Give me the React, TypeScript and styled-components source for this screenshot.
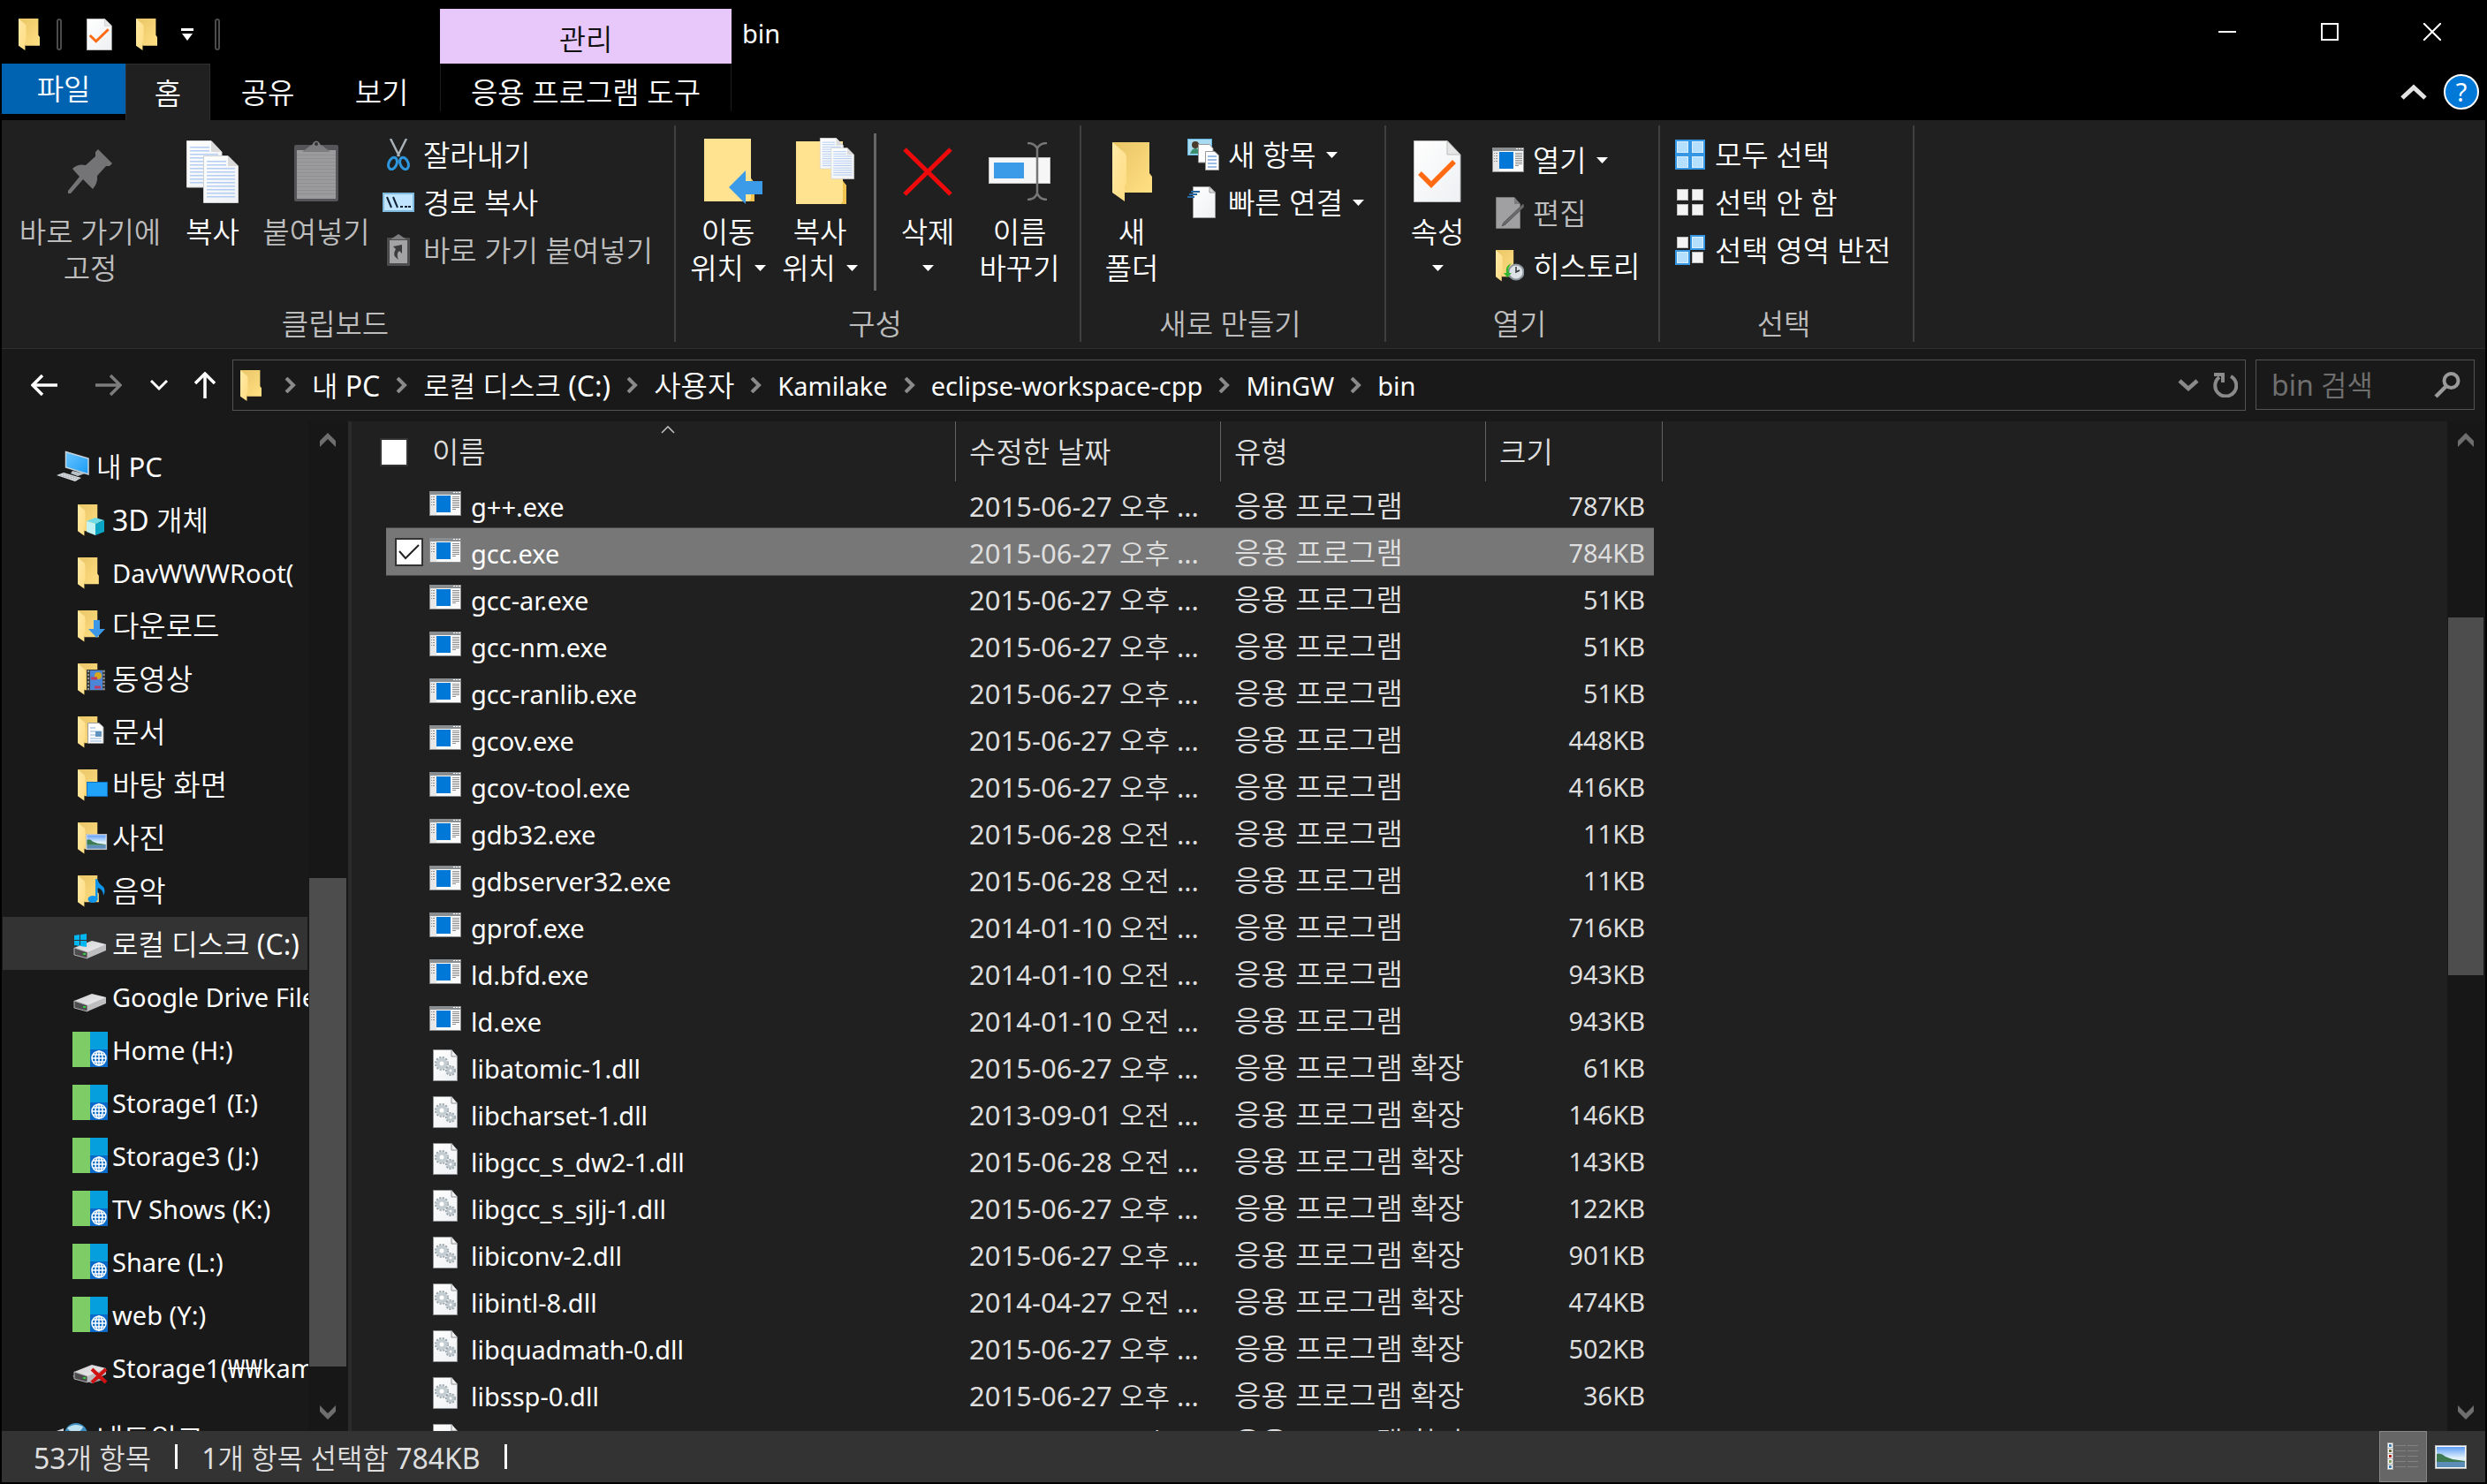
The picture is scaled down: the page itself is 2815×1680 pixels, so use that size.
import React from "react";
import styled, { createGlobalStyle, css } from "styled-components";

const LATIN = 29;
const DATE = 31;
const MIXED = 32;
const HANGUL = 33;

const GlobalStyle = createGlobalStyle`
  *, *::before, *::after { box-sizing: border-box; }
  html, body { margin: 0; padding: 0; background: #000; }
  body {
    font-family: "Noto Sans", "Noto Sans CJK KR DemiLight", "Noto Sans CJK KR", sans-serif;
    font-size: ${HANGUL}px;
    line-height: 41px;
    color: #fff;
    overflow: hidden;
  }
  button, input { font: inherit; color: inherit; }
  button { background: none; border: 0; padding: 0; margin: 0; cursor: default; }
  a { color: inherit; text-decoration: none; }
  svg { display: block; flex: none; }
`;

/* ---------- drawings ---------- */

const Defs = styled.svg`
  position: absolute;
  width: 0;
  height: 0;
`;

const SharedDefs = () => (
  <Defs aria-hidden="true">
    <defs>
      <linearGradient id="gBack" x1="0" y1="0" x2="1" y2="1">
        <stop offset="0" stopColor="#e9c565" />
        <stop offset="1" stopColor="#ffe084" />
      </linearGradient>
      <linearGradient id="gFlap" x1="0" y1="0" x2="1" y2="1">
        <stop offset="0" stopColor="#ffeaa6" />
        <stop offset="1" stopColor="#ffdc82" />
      </linearGradient>
      <linearGradient id="gPaper" x1="0" y1="0" x2="1" y2="1">
        <stop offset="0" stopColor="#ffffff" />
        <stop offset="1" stopColor="#eef0f3" />
      </linearGradient>
      <linearGradient id="gSky" x1="0" y1="0" x2="0" y2="1">
        <stop offset="0" stopColor="#5e9cf5" />
        <stop offset="0.55" stopColor="#e2f2fd" />
        <stop offset="1" stopColor="#cfe4f4" />
      </linearGradient>
      <linearGradient id="gScreen" x1="0" y1="0" x2="1" y2="1">
        <stop offset="0" stopColor="#6cc5ff" />
        <stop offset="1" stopColor="#189cf5" />
      </linearGradient>
      <linearGradient id="gDrive" x1="0" y1="0" x2="1" y2="1">
        <stop offset="0" stopColor="#cfcfd2" />
        <stop offset="1" stopColor="#f0f0f2" />
      </linearGradient>
    </defs>
  </Defs>
);

const FolderShape = () => (
  <>
    <path d="M0 0H42V35L45 39V57H14Z" fill="url(#gBack)" />
    <path d="M0 0L14 12Q16 14 16 17V46L14 50V67L0 57Z" fill="url(#gFlap)" />
  </>
);

const Folder = ({ w = 24, h = 36 }: { w?: number; h?: number }) => (
  <svg width={w} height={h} viewBox="0 0 45 67" preserveAspectRatio="none" aria-hidden="true">
    <FolderShape />
  </svg>
);

const CheckedPage = ({ w, h }: { w: number; h: number }) => (
  <svg width={w} height={h} viewBox="0 0 54 70" preserveAspectRatio="none" aria-hidden="true">
    <path d="M.5 .5H38L53 16V69.500H.5Z" fill="url(#gPaper)" stroke="#b9b9b9" />
    <path d="M38 .5V16H53Z" fill="#e6e6e6" stroke="#bdbdbd" />
    <path d="M7 37L20 50L46 24" fill="none" stroke="#ff6a13" strokeWidth="5.500" />
  </svg>
);

const Pin = () => (
  <svg width="50" height="50" viewBox="0 0 50 50" aria-hidden="true">
    <path d="M34 0L50 16L47 19L43 19L33 30Q34 38 28 45L17 34L3 50L0 50L0 47L13 31L5 22Q11 16 20 18L31 8L31 3Z" fill="#747476" />
  </svg>
);

const pageLines = (x: number, y: number, w: number, count: number) =>
  Array.from({ length: count }, (_, i) => (
    <rect key={i} x={x} y={y + i * 4} width={w} height="1.500" fill="#b4cdf2" />
  ));

const PagesShape = () => (
  <>
    <path d="M.5 .5H28L40 13V53H.5Z" fill="url(#gPaper)" stroke="#d5d5d5" />
    <path d="M28 .5V13H40Z" fill="#dadada" />
    {pageLines(4, 7, 22, 2)}
    {pageLines(4, 15, 32, 9)}
    <path d="M19.500 17.500H47L58.500 29V70.500H19.500Z" fill="url(#gPaper)" stroke="#d0d0d0" />
    <path d="M47 17.500V29H58.500Z" fill="#dadada" />
    {pageLines(23, 23, 22, 2)}
    {pageLines(23, 31, 32, 9)}
  </>
);

const CopyPages = () => (
  <svg width="59" height="71" viewBox="0 0 59 71" aria-hidden="true">
    <PagesShape />
  </svg>
);

const Clipboard = () => (
  <svg width="52" height="70" viewBox="0 0 52 70" aria-hidden="true">
    <rect x="1" y="5" width="50" height="64" rx="2" fill="#56565a" />
    <rect x="4" y="11" width="44" height="55" fill="#9b9b9d" />
    {Array.from({ length: 12 }, (_, i) => (
      <rect key={i} x="4" y={16 + i * 4} width="44" height="1" fill="#8f8f91" />
    ))}
    <path d="M10 13L19 6Q22 5 23 2Q26 -1 29 2Q30 5 33 6L42 13Z" fill="#7d7d80" />
    <circle cx="26" cy="4" r="2" fill="#333" />
  </svg>
);

const Scissors = () => (
  <svg width="36" height="36" viewBox="0 0 36 36" aria-hidden="true">
    <path d="M9 0L19 20M27 0L17 20" stroke="#a9b2b8" strokeWidth="2.500" fill="none" />
    <ellipse cx="11.500" cy="28" rx="4.500" ry="7" transform="rotate(22 11.500 28)" fill="none" stroke="#2d96dc" strokeWidth="3" />
    <ellipse cx="24.500" cy="28" rx="4.500" ry="7" transform="rotate(-22 24.500 28)" fill="none" stroke="#2d96dc" strokeWidth="3" />
  </svg>
);

const PathIcon = () => (
  <svg width="36" height="22" viewBox="0 0 36 22" aria-hidden="true">
    <rect x="1" y="1" width="34" height="20" fill="#bfe5ff" stroke="#7fb9dd" strokeWidth="2" />
    <path d="M5 5L10 17M12 5L17 17" stroke="#123" strokeWidth="2" />
    <path d="M20 15H23V17H20ZM25 15H28V17H25ZM29 15H32V17H29Z" fill="#123" />
  </svg>
);

const PasteShortcut = () => (
  <svg width="36" height="36" viewBox="0 0 36 36" aria-hidden="true">
    <rect x="5" y="4" width="26" height="32" rx="1" fill="#4c4c4e" />
    <rect x="8" y="7" width="20" height="26" fill="#a3a3a5" />
    <path d="M9 6L18 0L27 6Z" fill="#7d7d80" />
    <path d="M12 14L22 12V22L19 19Q15 22 18 29Q10 24 15 17Z" fill="#3b3b3d" />
  </svg>
);

const ClosedFolderShape = () => (
  <>
    <path d="M0 0H53V45L57 50V71H0Z" fill="#ffe390" />
    <path d="M53 45L57 50V71H50Q53 70 53 66Z" fill="#f0c350" />
  </>
);

const MoveTo = () => (
  <svg width="80" height="74" viewBox="-13 0 80 74" aria-hidden="true">
    <ClosedFolderShape />
    <path d="M28 55L47 36V48H66V63H47V74Z" fill="#3b9be9" />
  </svg>
);

const CopyTo = () => (
  <svg width="80" height="76" viewBox="-13 0 80 76" aria-hidden="true">
    <g transform="translate(0 4)">
      <ClosedFolderShape />
    </g>
    <g transform="translate(27 0) scale(.66)">
      <PagesShape />
    </g>
  </svg>
);

const DeleteIcon = () => (
  <svg width="56" height="56" viewBox="0 0 56 56" aria-hidden="true">
    <path d="M2 3L54 54M54 3L2 54" stroke="#ee0a0a" strokeWidth="5" />
  </svg>
);

const RenameIcon = () => (
  <svg width="70" height="66" viewBox="0 0 70 66" aria-hidden="true">
    <rect x=".5" y="17.500" width="69" height="29" fill="#f6f6f7" stroke="#c4c4c4" />
    <rect x="6" y="23" width="34" height="18" fill="#3b9be9" />
    <path d="M44 1Q52 1 55 7Q58 1 66 1M55 6V59M44 65Q52 65 55 58Q58 65 66 65" fill="none" stroke="#777" strokeWidth="2.500" />
  </svg>
);

const NewItem = () => (
  <svg width="36" height="36" viewBox="0 0 36 36" aria-hidden="true">
    <rect x=".5" y=".5" width="27" height="18" fill="#a8dbf2" stroke="#5fb2dc" />
    <circle cx="9" cy="7" r="4" fill="#4a3a2c" />
    <path d="M3 17Q5 11 9 11Q14 11 15 17Z" fill="#3b9070" />
    <path d="M12.500 6.500H25L29 11V27H12.500Z" fill="#fff" stroke="#999" />
    <path d="M20.500 14.500H31L35.500 19V35.500H20.500Z" fill="#fff" stroke="#999" />
    <path d="M23 20H33M23 24H33M23 28H33M23 32H33" stroke="#7aa9dd" strokeWidth="1.500" />
  </svg>
);

const QuickAccess = () => (
  <svg width="36" height="36" viewBox="0 0 36 36" aria-hidden="true">
    <path d="M6.500 .5H25L31.500 7V35.500H6.500Z" fill="url(#gPaper)" stroke="#9a9a9a" />
    <path d="M25 .5V7H31.500Z" fill="#ddd" stroke="#999" />
    <path d="M4 6H14M2 9H11M0 12H8" stroke="#2467a3" strokeWidth="2" />
  </svg>
);

const AppWindow = () => (
  <svg width="36" height="28" viewBox="0 0 36 28" aria-hidden="true">
    <rect width="36" height="28" fill="#8a8e91" />
    <rect x="1" y="4" width="34" height="23" fill="#fafafa" />
    <rect x="1" y="4" width="7" height="23" fill="#e8e8e8" />
    <rect x="8" y="5" width="16" height="19" fill="#0078d7" />
    <path d="M27 1.500H29M30 1.500H32M33 1.500H35" stroke="#fff" />
    <path d="M2 6.500H6M2 9.500H6M2 12.500H6M2 15.500H6" stroke="#8f8f8f" strokeDasharray="1 1 2" />
    <path d="M26 6.500H34M26 8.500H34M26 10.500H34M26 12.500H34M26 14.500H34M26 16.500H34M26 18.500H34M26 20.500H30" stroke="#8f8f8f" />
  </svg>
);

const EditIcon = () => (
  <svg width="36" height="36" viewBox="0 0 36 36" aria-hidden="true">
    <path d="M4.500 .5H25L31.500 8V35.500H4.500Z" fill="#a0a0a2" stroke="#77777a" />
    <path d="M25 .5V8H31.500Z" fill="#7c7c7f" />
    <path d="M35 8L36 11L15 31L11 33L13 29Z" fill="#6b6b6e" stroke="#545457" />
  </svg>
);

const HistoryIcon = () => (
  <svg width="36" height="36" viewBox="0 0 36 36" aria-hidden="true">
    <g transform="translate(4 0) scale(.48 .53)">
      <FolderShape />
    </g>
    <circle cx="27" cy="25" r="8.500" fill="#dde2e6" stroke="#8d969c" strokeWidth="2" />
    <path d="M27 19V25L31 23" fill="none" stroke="#333" strokeWidth="1.500" />
    <path d="M22 15Q17 19 19 26H22L17 31L13 26H16Q14 18 22 15Z" fill="#2fb52f" />
  </svg>
);

const Tiles = ({ on }: { on: boolean[] }) => (
  <svg width="36" height="36" viewBox="0 0 36 36" aria-hidden="true">
    {on.map((active, i) => {
      const x = 1 + (i % 2) * 17;
      const y = 1 + Math.floor(i / 2) * 17;
      return (
        <g key={i}>
          {active && <rect x={x} y={y} width="17" height="17" fill="#3596e4" />}
          <rect x={x + 2.500} y={y + 2.500} width="12" height="12" fill={active ? "#b5dfff" : "#f4f4f4"} stroke={active ? "#d9efff" : "#bcbcbc"} />
        </g>
      );
    })}
  </svg>
);

const DllIcon = () => (
  <svg width="28" height="36" viewBox="0 0 28 36" aria-hidden="true">
    <path d="M.5 .5H21L27.500 8V35.500H.5Z" fill="url(#gPaper)" stroke="#8e9295" />
    <path d="M21 .5V8H27.500" fill="#f1f1f1" stroke="#8e9295" />
    <circle cx="10" cy="16" r="6.500" fill="none" stroke="#9aa5ab" strokeWidth="3" strokeDasharray="2 1.400" />
    <circle cx="10" cy="16" r="4.500" fill="#fff" stroke="#c3cdd2" strokeWidth="4" />
    <circle cx="20" cy="24" r="4.500" fill="none" stroke="#9aa5ab" strokeWidth="3" strokeDasharray="2 1.200" />
    <circle cx="20" cy="24" r="3" fill="#fff" stroke="#bcc6cb" strokeWidth="3" />
  </svg>
);

const Scenery = ({ w, h }: { w: number; h: number }) => (
  <svg width={w} height={h} viewBox="0 0 36 27" preserveAspectRatio="none" aria-hidden="true">
    <SceneryShape />
  </svg>
);

const SceneryShape = () => (
  <>
    <rect x=".5" y=".5" width="35" height="26" fill="#fff" stroke="#b5b5b5" />
    <rect x="2" y="2" width="32" height="23" fill="url(#gSky)" />
    <path d="M2 10Q7 8 12 13L20 16L34 18V19H2Z" fill="#3d7a52" />
    <path d="M2 19H34V25H2Z" fill="#5b8db8" />
  </>
);

const DetailsView = () => (
  <svg width="36" height="32" viewBox="0 0 36 32" aria-hidden="true">
    <rect width="7" height="31" fill="#a9a9a9" />
    {["#3d7fb5", "#6c6a3a", "#b32414", "#86a05b", "#3d7fb5"].map((c, i) => (
      <g key={i}>
        <rect x="1" y={1 + i * 6} width="5" height="5" fill="#fff" />
        <rect x="2" y={2 + i * 6} width="3" height="3" fill={c} />
        <path d={`M9 ${3.500 + i * 6}H21M23 ${3.500 + i * 6}H35`} stroke="#828282" />
      </g>
    ))}
  </svg>
);

const Caret = () => (
  <svg width="13" height="7" viewBox="0 0 13 7" aria-hidden="true">
    <path d="M0 0H13L6.500 7Z" fill="#fff" />
  </svg>
);

const ScrollChevron = ({ down = false }: { down?: boolean }) => (
  <svg width="18" height="16" viewBox="0 0 18 16" aria-hidden="true">
    <path d={down ? "M0 0L9 9L18 0V7L9 16L0 7Z" : "M0 9L9 0L18 9V16L9 7L0 16Z"} fill="#6e6e6e" />
  </svg>
);

const DriveShape = () => (
  <>
    <path d="M2 25L22 17L38 21V23L17 31Z" fill="url(#gDrive)" />
    <path d="M2 25L17 30V37L2 33Z" fill="#4c4c4e" stroke="#b4b4b6" />
    <path d="M17 30L38 21V28L17 37Z" fill="#bdbdc0" />
    <rect x="12" y="31" width="3" height="2" fill="#2fd13a" />
  </>
);

type SideIcon =
  | "pc" | "cube" | "folder" | "download" | "video" | "document" | "desktop"
  | "picture" | "music" | "system" | "drive" | "web" | "broken" | "network";

const overlays: Record<SideIcon, React.ReactNode> = {
  pc: (
    <>
      <path d="M0 30L8 27L28 33L21 37Z" fill="#d7dade" />
      <path d="M4 30L22 35M7 28.500L25 34" stroke="#a0a5aa" strokeDasharray="2 1" />
      <path d="M18 25L32 28L24 31L16 28Z" fill="#b9c1c8" />
      <path d="M10.500 3.500L36 11V29L10.500 21Z" fill="url(#gScreen)" stroke="#c9d3da" strokeWidth="1.500" />
    </>
  ),
  cube: (
    <>
      <path d="M16 22L26 18L36 21L26 25Z" fill="#6fdbe6" />
      <path d="M16 22L26 25V38L16 34Z" fill="#c2f1f2" />
      <path d="M26 25L36 21V34L26 38Z" fill="#0aa5c5" />
    </>
  ),
  folder: null,
  download: <path d="M24 14H31V24H37L27.500 34L18 24H24Z" fill="#3c97e6" />,
  video: (
    <>
      <rect x="16" y="10" width="21" height="24" fill="#3a3a3a" />
      <rect x="20" y="11" width="14" height="22" fill="#4b86d8" />
      <circle cx="29" cy="17" r="4" fill="#d8a81e" />
      <path d="M21 20H28M25 30H32" stroke="#c03a63" strokeWidth="3" />
      <path d="M18 11V33M35.500 11V33" stroke="#999" strokeWidth="2" strokeDasharray="2 2" />
    </>
  ),
  document: (
    <>
      <path d="M17.500 10.500H30L35 15V33.500H17.500Z" fill="#fff" stroke="#9c9c9c" />
      <path d="M20 16H26M20 20H33M20 24H33M20 28H33M20 31H33" stroke="#8db2d8" />
      <rect x="26" y="20" width="7" height="6" fill="#5f93bd" />
    </>
  ),
  desktop: <rect x="16.500" y="17.500" width="23" height="16" fill="#1fa2f8" stroke="#0c6fbf" />,
  picture: (
    <g transform="translate(15 16) scale(.67)">
      <SceneryShape />
    </g>
  ),
  music: (
    <>
      <ellipse cx="23" cy="30" rx="5.500" ry="4" fill="#0f95ea" />
      <path d="M26 7H28Q30 13 35 16Q38 20 35 26Q35 19 28.500 17V30H26Z" fill="#0f95ea" />
    </>
  ),
  system: (
    <>
      <DriveShape />
      <path d="M2 11L8 10V16H2ZM9 10L16 9V16H9ZM2 17H8V23L2 22ZM9 17H16V24L9 23Z" fill="#00b7f1" />
    </>
  ),
  drive: <DriveShape />,
  web: (
    <>
      <rect width="20" height="40" fill="#7dcc66" />
      <rect x="20" width="20" height="40" fill="#049fdc" />
      <rect x="20" y="20" width="20" height="20" fill="#0a6ac8" />
      <g fill="none" stroke="#fff" strokeWidth="1.500">
        <circle cx="30" cy="30" r="8" />
        <ellipse cx="30" cy="30" rx="4" ry="8" />
        <path d="M22 30H38M23 26H37M23 34H37M30 22V38" />
      </g>
    </>
  ),
  broken: (
    <>
      <path d="M0 30L8 26L34 34L22 38Z" fill="#9d9da0" />
      <DriveShape />
      <path d="M22 22L38 37M38 22L22 37" stroke="#d01212" strokeWidth="4" />
    </>
  ),
  network: (
    <>
      <circle cx="22" cy="16" r="13" fill="#3c8fc0" />
      <path d="M12 9Q20 2 30 7Q28 14 18 14Z" fill="#bfe2f3" />
      <path d="M0 12L8 9V28L0 30Z" fill="#d5d9dd" />
    </>
  ),
};

const withFolder: SideIcon[] = ["cube", "folder", "download", "video", "document", "desktop", "picture", "music"];

const SidebarIcon = ({ kind }: { kind: SideIcon }) => (
  <svg width="40" height="40" viewBox="0 0 40 40" aria-hidden="true">
    {withFolder.includes(kind) && (
      <g transform="translate(6 3) scale(.53)">
        <FolderShape />
      </g>
    )}
    {overlays[kind]}
  </svg>
);

/* ---------- window and title bar ---------- */

const Window = styled.div`
  display: flex;
  flex-direction: column;
  height: 100vh;
  padding: 0 2px 2px;
  background: #000;
`;

const TitleBar = styled.header`
  display: flex;
  flex: none;
  height: 72px;
  padding-right: 2px;
`;

const QuickTools = styled.div`
  display: flex;
  align-items: center;
  width: 496px;
  padding: 6px 0 0 19px;
`;

const ToolSeparator = styled.span<{ $after: number }>`
  width: 6px;
  height: 36px;
  margin-right: ${(p) => p.$after}px;
  border: 2px solid #4b4b4b;
  border-radius: 3px;
`;

const QuickButton = styled.button<{ $after: number }>`
  display: flex;
  align-items: center;
  margin-right: ${(p) => p.$after}px;
`;

const ContextTitle = styled.div`
  width: 330px;
  height: 62px;
  margin-top: 10px;
  background: #e8c8fa;
  color: #111;
  line-height: 70px;
  text-align: center;
`;

const Title = styled.h1`
  flex: 1;
  margin: 0;
  padding-left: 12px;
  font-size: ${LATIN}px;
  font-weight: 400;
  line-height: 76px;
`;

const CaptionButton = styled.button`
  display: grid;
  place-items: center;
  width: 116px;
  height: 72px;
`;

const TabBar = styled.div`
  display: flex;
  flex: none;
  height: 64px;
`;

const Tab = styled.button<{ $kind?: "file" | "active" | "context"; $width: number }>`
  width: ${(p) => p.$width}px;
  line-height: 66px;
  ${(p) =>
    p.$kind === "file" &&
    css`
      height: 57px;
      line-height: 58px;
      background: #0063b1;
    `}
  ${(p) =>
    p.$kind === "active" &&
    css`
      background: #202020;
      border: solid #2f2f2f;
      border-width: 1px 1px 0;
    `}
  ${(p) =>
    p.$kind === "context" &&
    css`
      height: 54px;
      margin-left: 2px;
      border: solid #1b1b1b;
      border-width: 0 1px;
    `}
`;

const TabTools = styled.div`
  display: flex;
  align-items: center;
  gap: 19px;
  margin-left: auto;
  padding-right: 7px;
`;

const Help = styled.button`
  width: 40px;
  height: 40px;
  border: 2px solid #fff;
  border-radius: 50%;
  background: #0078d7;
  font-size: ${LATIN}px;
  line-height: 36px;
`;

/* ---------- ribbon ---------- */

const Ribbon = styled.section`
  display: flex;
  flex: none;
  height: 259px;
  padding: 6px 0 7px;
  background: #202020;
  border: solid #2d2d2d;
  border-width: 0 0 1px;
`;

const RibbonGroup = styled.div<{ $width: number }>`
  display: flex;
  flex: none;
  flex-direction: column;
  width: ${(p) => p.$width}px;
  border-right: 2px solid #404040;
`;

const GroupBody = styled.div<{ $left: number }>`
  display: flex;
  flex: 1;
  padding-left: ${(p) => p.$left}px;
`;

const GroupLabel = styled.div`
  padding-right: 6px;
  color: #bdbdbd;
  text-align: center;
`;

const BigButton = styled.button<{ $width: number; $off?: boolean }>`
  display: flex;
  flex: none;
  flex-direction: column;
  align-items: center;
  width: ${(p) => p.$width}px;
  padding-top: 8px;
  color: ${(p) => (p.$off ? "#bdbdbd" : "#fff")};
  white-space: nowrap;
`;

const BigIcon = styled.span`
  display: grid;
  place-items: center;
  height: 88px;
  margin-bottom: 4px;
`;

const ButtonLine = styled.span`
  display: flex;
  align-items: center;
  gap: 12px;
  height: 41px;
`;

const RibbonDivider = styled.span`
  width: 3px;
  height: 178px;
  margin: 9px 6px 0 9px;
  background: #666;
`;

const SmallList = styled.div<{ $top: number; $left: number }>`
  display: flex;
  flex-direction: column;
  padding: ${(p) => p.$top}px 0 0 ${(p) => p.$left}px;
`;

const SmallButton = styled.button<{ $height: number; $off?: boolean }>`
  display: flex;
  align-items: center;
  height: ${(p) => p.$height}px;
  color: ${(p) => (p.$off ? "#bdbdbd" : "#fff")};
  white-space: nowrap;
`;

const SmallIcon = styled.span`
  display: grid;
  place-items: center;
  width: 36px;
  margin-right: 10px;
`;

const SmallCaret = styled.span`
  margin-left: 11px;
`;

interface BigProps {
  icon: React.ReactNode;
  lines: string[];
  width?: number;
  off?: boolean;
  menu?: boolean;
}

const Big = ({ icon, lines, width = 104, off, menu }: BigProps) => (
  <BigButton type="button" $width={width} $off={off}>
    <BigIcon>{icon}</BigIcon>
    {lines.map((line, i) => (
      <ButtonLine key={i}>
        {line}
        {menu && i === lines.length - 1 && lines.length > 1 && <Caret />}
      </ButtonLine>
    ))}
    {menu && lines.length === 1 && (
      <ButtonLine>
        <Caret />
      </ButtonLine>
    )}
  </BigButton>
);

interface SmallProps {
  icon: React.ReactNode;
  label: string;
  height?: number;
  off?: boolean;
  menu?: boolean;
}

const Small = ({ icon, label, height = 54, off, menu }: SmallProps) => (
  <SmallButton type="button" $height={height} $off={off}>
    <SmallIcon>{icon}</SmallIcon>
    {label}
    {menu && (
      <SmallCaret>
        <Caret />
      </SmallCaret>
    )}
  </SmallButton>
);

/* ---------- navigation row ---------- */

const NavRow = styled.div`
  display: flex;
  flex: none;
  align-items: flex-start;
  height: 82px;
  padding: 12px 12px 0;
  background: #191919;
`;

const NavButton = styled.button<{ $width: number }>`
  display: grid;
  flex: none;
  place-items: center;
  width: ${(p) => p.$width}px;
  height: 58px;
`;

const AddressBar = styled.nav`
  display: flex;
  flex: 1;
  align-items: center;
  height: 58px;
  margin-right: 11px;
  padding-left: 8px;
  border: 1px solid #535353;
`;

const Crumbs = styled.ol`
  display: flex;
  flex: 1;
  align-items: center;
  margin: 0;
  padding: 0 0 0 8px;
  list-style: none;
`;

const Crumb = styled.li<{ $size: number }>`
  display: flex;
  align-items: center;
  gap: 18px;
  padding-left: 18px;
  font-size: ${(p) => p.$size}px;
  white-space: nowrap;
`;

const CrumbArrow = () => (
  <svg width="13" height="18" viewBox="0 0 13 18" aria-hidden="true">
    <path d="M2 1L10 9L2 17" fill="none" stroke="#8a8a8a" strokeWidth="4" />
  </svg>
);

const SearchBox = styled.form`
  display: flex;
  align-items: center;
  width: 248px;
  height: 57px;
  padding: 0 15px 0 17px;
  border: 1px solid #535353;
`;

const SearchInput = styled.input`
  flex: 1;
  min-width: 0;
  padding: 0;
  border: 0;
  outline: 0;
  background: none;
  font-size: ${MIXED}px;
  &::placeholder {
    color: #6f6f6f;
    opacity: 1;
  }
`;

/* ---------- body ---------- */

const Body = styled.div`
  display: flex;
  flex: 1;
  min-height: 0;
  background: #202020;
`;

const Sidebar = styled.nav`
  display: flex;
  flex: none;
  flex-direction: column;
  width: 347px;
  padding: 21px 1px 0;
  overflow: hidden;
  background: #191919;
`;

const SideLink = styled.a<{ $root?: boolean; $active?: boolean; $gap?: boolean; $size: number }>`
  display: flex;
  flex: none;
  align-items: center;
  gap: 5px;
  height: 60px;
  margin-top: ${(p) => (p.$gap ? 20 : 0)}px;
  padding-left: ${(p) => (p.$root ? 61 : 79)}px;
  background: ${(p) => (p.$active ? "#333" : "none")};
  font-size: ${(p) => p.$size}px;
  white-space: nowrap;
`;

const Track = styled.div<{ $width: number }>`
  display: flex;
  flex: none;
  flex-direction: column;
  width: ${(p) => p.$width}px;
  padding: 0 2px 0 1px;
  background: #171717;
`;

const TrackButton = styled.button`
  display: grid;
  place-items: center;
  height: 42px;
`;

const TrackPart = styled.div<{ $grow: number; $thumb?: boolean }>`
  flex: ${(p) => p.$grow} 0 0;
  background: ${(p) => (p.$thumb ? "#4d4d4d" : "none")};
`;

const Splitter = styled.div`
  flex: none;
  width: 4px;
  background: #2b2b2b;
`;

const ScrollBar = ({ width, parts }: { width: number; parts: number[] }) => (
  <Track $width={width}>
    <TrackButton type="button" aria-label="위로">
      <ScrollChevron />
    </TrackButton>
    <TrackPart $grow={parts[0]} />
    <TrackPart $grow={parts[1]} $thumb />
    <TrackPart $grow={parts[2]} />
    <TrackButton type="button" aria-label="아래로">
      <ScrollChevron down />
    </TrackButton>
  </Track>
);

const ListPane = styled.main`
  flex: 1;
  min-width: 0;
  overflow: hidden;
`;

const FileTable = styled.table`
  width: 1484px;
  table-layout: fixed;
  border-collapse: separate;
  border-spacing: 0;
`;

const HeadCell = styled.th<{ $name?: boolean }>`
  position: relative;
  height: 68px;
  padding: 1px 0 0 ${(p) => (p.$name ? 32 : 15)}px;
  border-right: 1px solid #636363;
  color: #dedede;
  font-weight: 400;
  text-align: left;
`;

const HeadContent = styled.div`
  display: flex;
  align-items: center;
  gap: 27px;
`;

const SortMark = styled.span`
  position: absolute;
  top: 5px;
  left: 32px;
  right: 0;
  display: flex;
  justify-content: center;
`;

const CheckWrap = styled.span`
  display: inline-grid;
  flex: none;
  width: 32px;
  height: 32px;
  & > * {
    grid-area: 1 / 1;
  }
  & > svg {
    pointer-events: none;
  }
`;

const CheckInput = styled.input`
  appearance: none;
  width: 32px;
  height: 32px;
  margin: 0;
  border: 2px solid #333;
  background: #fff;
`;

const FileRow = styled.tr<{ $selected?: boolean }>`
  ${(p) =>
    p.$selected &&
    css`
      & > td:not(:first-child):not(:last-child) {
        background: #777;
        box-shadow: 0 -1px #484848, 0 1px #484848;
      }
    `}
`;

const Cell = styled.td<{ $size?: number; $right?: boolean }>`
  height: 53px;
  padding: 3px 10px 0 15px;
  overflow: hidden;
  color: #dedede;
  font-size: ${(p) => p.$size ?? HANGUL}px;
  line-height: 50px;
  text-align: ${(p) => (p.$right ? "right" : "left")};
  white-space: nowrap;
`;

const NameCell = styled(Cell)`
  padding: 0;
  color: #fff;
`;

const NameContent = styled.div`
  display: flex;
  align-items: center;
  height: 53px;
  padding-left: 10px;
`;

const CheckSlot = styled.span`
  display: flex;
  width: 38px;
`;

const FileIcon = styled.span`
  display: grid;
  place-items: center;
  width: 38px;
  height: 50px;
  margin-right: 10px;
  align-self: flex-start;
`;

const FileName = styled.span`
  padding-top: 4px;
`;

const Tick = () => (
  <svg width="32" height="32" viewBox="0 0 32 32" aria-hidden="true">
    <path d="M5 15L12 23L27 8" fill="none" stroke="#222" strokeWidth="2" />
  </svg>
);

/* ---------- status bar ---------- */

const StatusBar = styled.footer`
  display: flex;
  flex: none;
  align-items: center;
  height: 58px;
  padding-left: 36px;
  background: #333;
  color: #dedede;
  font-size: ${MIXED}px;
`;

const StatusText = styled.span`
  padding-top: 2px;
`;

const StatusBarLine = styled.span`
  width: 3px;
  height: 28px;
  margin: 0 27px;
  background: #fff;
`;

const ViewButtons = styled.div`
  display: flex;
  margin-left: auto;
  padding-right: 12px;
`;

const ViewButton = styled.button<{ $active?: boolean }>`
  display: grid;
  place-items: center;
  width: 54px;
  height: 58px;
  border: 1px solid ${(p) => (p.$active ? "#888" : "transparent")};
  background: ${(p) => (p.$active ? "#666" : "none")};
`;

/* ---------- data ---------- */

const places: { icon: SideIcon; label: string; size: number; root?: boolean; active?: boolean; gap?: boolean }[] = [
  { icon: "pc", label: "내 PC", size: DATE, root: true },
  { icon: "cube", label: "3D 개체", size: MIXED },
  { icon: "folder", label: "DavWWWRoot(", size: LATIN },
  { icon: "download", label: "다운로드", size: HANGUL },
  { icon: "video", label: "동영상", size: HANGUL },
  { icon: "document", label: "문서", size: HANGUL },
  { icon: "desktop", label: "바탕 화면", size: HANGUL },
  { icon: "picture", label: "사진", size: HANGUL },
  { icon: "music", label: "음악", size: HANGUL },
  { icon: "system", label: "로컬 디스크 (C:)", size: MIXED, active: true },
  { icon: "drive", label: "Google Drive File Stream (G:)", size: LATIN },
  { icon: "web", label: "Home (H:)", size: LATIN },
  { icon: "web", label: "Storage1 (I:)", size: LATIN },
  { icon: "web", label: "Storage3 (J:)", size: LATIN },
  { icon: "web", label: "TV Shows (K:)", size: LATIN },
  { icon: "web", label: "Share (L:)", size: LATIN },
  { icon: "web", label: "web (Y:)", size: LATIN },
  { icon: "broken", label: "Storage1(₩₩kamilake", size: LATIN },
  { icon: "network", label: "네트워크", size: HANGUL, root: true, gap: true },
];

const crumbs: [string, number][] = [
  ["내 PC", MIXED],
  ["로컬 디스크 (C:)", MIXED],
  ["사용자", HANGUL],
  ["Kamilake", LATIN],
  ["eclipse-workspace-cpp", LATIN],
  ["MinGW", LATIN],
  ["bin", LATIN],
];

const files: [string, string, string][] = [
  ["g++.exe", "2015-06-27 오후 ...", "787KB"],
  ["gcc.exe", "2015-06-27 오후 ...", "784KB"],
  ["gcc-ar.exe", "2015-06-27 오후 ...", "51KB"],
  ["gcc-nm.exe", "2015-06-27 오후 ...", "51KB"],
  ["gcc-ranlib.exe", "2015-06-27 오후 ...", "51KB"],
  ["gcov.exe", "2015-06-27 오후 ...", "448KB"],
  ["gcov-tool.exe", "2015-06-27 오후 ...", "416KB"],
  ["gdb32.exe", "2015-06-28 오전 ...", "11KB"],
  ["gdbserver32.exe", "2015-06-28 오전 ...", "11KB"],
  ["gprof.exe", "2014-01-10 오전 ...", "716KB"],
  ["ld.bfd.exe", "2014-01-10 오전 ...", "943KB"],
  ["ld.exe", "2014-01-10 오전 ...", "943KB"],
  ["libatomic-1.dll", "2015-06-27 오후 ...", "61KB"],
  ["libcharset-1.dll", "2013-09-01 오전 ...", "146KB"],
  ["libgcc_s_dw2-1.dll", "2015-06-28 오전 ...", "143KB"],
  ["libgcc_s_sjlj-1.dll", "2015-06-27 오후 ...", "122KB"],
  ["libiconv-2.dll", "2015-06-27 오후 ...", "901KB"],
  ["libintl-8.dll", "2014-04-27 오전 ...", "474KB"],
  ["libquadmath-0.dll", "2015-06-27 오후 ...", "502KB"],
  ["libssp-0.dll", "2015-06-27 오후 ...", "36KB"],
  ["libstdc++-6.dll", "2015-06-27 오후 ...", "997KB"],
];

const selectedFile = "gcc.exe";

/* ---------- page ---------- */

export default function App() {
  return (
    <Window>
      <GlobalStyle />
      <SharedDefs />

      <TitleBar>
        <QuickTools>
          <QuickButton type="button" aria-label="창 메뉴" $after={19}>
            <Folder />
          </QuickButton>
          <ToolSeparator $after={28} />
          <QuickButton type="button" aria-label="속성" $after={27}>
            <CheckedPage w={29} h={36} />
          </QuickButton>
          <QuickButton type="button" aria-label="새 폴더" $after={27}>
            <Folder />
          </QuickButton>
          <QuickButton type="button" aria-label="빠른 실행 도구 모음 사용자 지정" $after={24}>
            <svg width="14" height="14" viewBox="0 0 14 14" aria-hidden="true">
              <path d="M0 0H14V3H0ZM1 6H13L7 14Z" fill="#fff" />
            </svg>
          </QuickButton>
          <ToolSeparator $after={0} />
        </QuickTools>
        <ContextTitle>관리</ContextTitle>
        <Title>bin</Title>
        <CaptionButton type="button" aria-label="최소화">
          <svg width="20" height="20" viewBox="0 0 20 20" aria-hidden="true">
            <path d="M0 10H20" stroke="#fff" strokeWidth="2" />
          </svg>
        </CaptionButton>
        <CaptionButton type="button" aria-label="최대화">
          <svg width="20" height="20" viewBox="0 0 20 20" aria-hidden="true">
            <path d="M1 1H19V19H1Z" fill="none" stroke="#fff" strokeWidth="2" />
          </svg>
        </CaptionButton>
        <CaptionButton type="button" aria-label="닫기">
          <svg width="20" height="20" viewBox="0 0 20 20" aria-hidden="true">
            <path d="M0 0L20 20M20 0L0 20" stroke="#fff" strokeWidth="2" />
          </svg>
        </CaptionButton>
      </TitleBar>

      <TabBar>
        <Tab type="button" $kind="file" $width={140}>파일</Tab>
        <Tab type="button" $kind="active" $width={96}>홈</Tab>
        <Tab type="button" $width={130}>공유</Tab>
        <Tab type="button" $width={128}>보기</Tab>
        <Tab type="button" $kind="context" $width={330}>응용 프로그램 도구</Tab>
        <TabTools>
          <button type="button" aria-label="리본 최소화">
            <svg width="30" height="19" viewBox="0 0 30 19" aria-hidden="true">
              <path d="M2 16L15 4L28 16" fill="none" stroke="#e4e4e4" strokeWidth="5" />
            </svg>
          </button>
          <Help type="button" aria-label="도움말">?</Help>
        </TabTools>
      </TabBar>

      <Ribbon>
        <RibbonGroup $width={763}>
          <GroupBody $left={18}>
            <Big icon={<Pin />} lines={["바로 가기에", "고정"]} width={164} off />
            <Big icon={<CopyPages />} lines={["복사"]} width={113} />
            <Big icon={<Clipboard />} lines={["붙여넣기"]} width={122} off />
            <SmallList $top={6} $left={14}>
              <Small icon={<Scissors />} label="잘라내기" />
              <Small icon={<PathIcon />} label="경로 복사" />
              <Small icon={<PasteShortcut />} label="바로 가기 붙여넣기" off />
            </SmallList>
          </GroupBody>
          <GroupLabel>클립보드</GroupLabel>
        </RibbonGroup>
        <RibbonGroup $width={459}>
          <GroupBody $left={7}>
            <Big icon={<MoveTo />} lines={["이동", "위치"]} menu />
            <Big icon={<CopyTo />} lines={["복사", "위치"]} menu />
            <RibbonDivider />
            <Big icon={<DeleteIcon />} lines={["삭제"]} menu />
            <Big icon={<RenameIcon />} lines={["이름", "바꾸기"]} />
          </GroupBody>
          <GroupLabel>구성</GroupLabel>
        </RibbonGroup>
        <RibbonGroup $width={345}>
          <GroupBody $left={5}>
            <Big icon={<Folder w={45} h={67} />} lines={["새", "폴더"]} />
            <SmallList $top={6} $left={11}>
              <Small icon={<NewItem />} label="새 항목" menu />
              <Small icon={<QuickAccess />} label="빠른 연결" menu />
            </SmallList>
          </GroupBody>
          <GroupLabel>새로 만들기</GroupLabel>
        </RibbonGroup>
        <RibbonGroup $width={310}>
          <GroupBody $left={6}>
            <Big icon={<CheckedPage w={54} h={70} />} lines={["속성"]} menu />
            <SmallList $top={9} $left={10}>
              <Small icon={<AppWindow />} label="열기" height={60} menu />
              <Small icon={<EditIcon />} label="편집" height={60} off />
              <Small icon={<HistoryIcon />} label="히스토리" height={60} />
            </SmallList>
          </GroupBody>
          <GroupLabel>열기</GroupLabel>
        </RibbonGroup>
        <RibbonGroup $width={288}>
          <GroupBody $left={5}>
            <SmallList $top={6} $left={11}>
              <Small icon={<Tiles on={[true, true, true, true]} />} label="모두 선택" />
              <Small icon={<Tiles on={[false, false, false, false]} />} label="선택 안 함" />
              <Small icon={<Tiles on={[false, true, true, false]} />} label="선택 영역 반전" />
            </SmallList>
          </GroupBody>
          <GroupLabel>선택</GroupLabel>
        </RibbonGroup>
      </Ribbon>

      <NavRow>
        <NavButton type="button" aria-label="뒤로" $width={72}>
          <svg width="30" height="24" viewBox="0 0 30 24" aria-hidden="true">
            <path d="M30 12H3M13 1L2 12L13 23" fill="none" stroke="#fff" strokeWidth="3.500" />
          </svg>
        </NavButton>
        <NavButton type="button" aria-label="앞으로" $width={74}>
          <svg width="30" height="24" viewBox="0 0 30 24" aria-hidden="true">
            <path d="M0 12H27M17 1L28 12L17 23" fill="none" stroke="#7d7d7d" strokeWidth="3.500" />
          </svg>
        </NavButton>
        <NavButton type="button" aria-label="최근 위치" $width={40}>
          <svg width="20" height="14" viewBox="0 0 20 14" aria-hidden="true">
            <path d="M1 2L10 11L19 2" fill="none" stroke="#fff" strokeWidth="3" />
          </svg>
        </NavButton>
        <NavButton type="button" aria-label="위로" $width={63}>
          <svg width="24" height="30" viewBox="0 0 24 30" aria-hidden="true">
            <path d="M12 30V3M1 13L12 2L23 13" fill="none" stroke="#fff" strokeWidth="3.500" />
          </svg>
        </NavButton>
        <AddressBar aria-label="주소">
          <Folder w={24} h={35} />
          <Crumbs>
            {crumbs.map(([label, size]) => (
              <Crumb key={label} $size={size}>
                <CrumbArrow />
                <a href="#crumb">{label}</a>
              </Crumb>
            ))}
          </Crumbs>
          <NavButton type="button" aria-label="이전 위치" $width={40}>
            <svg width="24" height="16" viewBox="0 0 24 16" aria-hidden="true">
              <path d="M2 3L12 12L22 3" fill="none" stroke="#8a8a8a" strokeWidth="4.500" />
            </svg>
          </NavButton>
          <NavButton type="button" aria-label="새로 고침" $width={44}>
            <svg width="28" height="28" viewBox="0 0 28 28" aria-hidden="true">
              <path d="M7 5A12 12 0 1 0 20 4" fill="none" stroke="#8a8a8a" strokeWidth="4" />
              <path d="M1 0H13V11H9V4H1Z" fill="#8a8a8a" />
            </svg>
          </NavButton>
        </AddressBar>
        <SearchBox role="search">
          <SearchInput type="text" aria-label="bin 검색" placeholder="bin 검색" />
          <svg width="30" height="30" viewBox="0 0 30 30" aria-hidden="true">
            <circle cx="19.500" cy="10" r="8" fill="none" stroke="#9a9a9a" strokeWidth="4" />
            <path d="M14 16L2 28" stroke="#9a9a9a" strokeWidth="4.500" />
          </svg>
        </SearchBox>
      </NavRow>

      <Body>
        <Sidebar aria-label="탐색 창">
          {places.map((p) => (
            <SideLink key={p.label} href="#place" $size={p.size} $root={p.root} $active={p.active} $gap={p.gap}>
              <SidebarIcon kind={p.icon} />
              {p.label}
            </SideLink>
          ))}
        </Sidebar>
        <ScrollBar width={45} parts={[475, 553, 31]} />
        <Splitter />
        <ListPane>
          <FileTable>
            <colgroup>
              <col style={{ width: 39 }} />
              <col style={{ width: 645 }} />
              <col style={{ width: 300 }} />
              <col style={{ width: 300 }} />
              <col style={{ width: 190 }} />
              <col style={{ width: 10 }} />
            </colgroup>
            <thead>
              <tr>
                <HeadCell colSpan={2} $name>
                  <SortMark>
                    <svg width="16" height="9" viewBox="0 0 16 9" aria-hidden="true">
                      <path d="M1 8L8 1L15 8" fill="none" stroke="#c4c4c4" strokeWidth="1.500" />
                    </svg>
                  </SortMark>
                  <HeadContent>
                    <CheckInput type="checkbox" aria-label="모두 선택" />
                    이름
                  </HeadContent>
                </HeadCell>
                <HeadCell>수정한 날짜</HeadCell>
                <HeadCell>유형</HeadCell>
                <HeadCell colSpan={2}>크기</HeadCell>
              </tr>
            </thead>
            <tbody>
              {files.map(([name, date, size]) => {
                const selected = name === selectedFile;
                const dll = name.endsWith(".dll");
                return (
                  <FileRow key={name} $selected={selected}>
                    <td />
                    <NameCell $size={LATIN}>
                      <NameContent>
                        <CheckSlot>
                          {selected && (
                            <CheckWrap>
                              <CheckInput type="checkbox" defaultChecked aria-label={name} />
                              <Tick />
                            </CheckWrap>
                          )}
                        </CheckSlot>
                        <FileIcon>{dll ? <DllIcon /> : <AppWindow />}</FileIcon>
                        <FileName>{name}</FileName>
                      </NameContent>
                    </NameCell>
                    <Cell $size={DATE}>{date}</Cell>
                    <Cell>{dll ? "응용 프로그램 확장" : "응용 프로그램"}</Cell>
                    <Cell $size={LATIN} $right>{size}</Cell>
                    <td />
                  </FileRow>
                );
              })}
            </tbody>
          </FileTable>
        </ListPane>
        <ScrollBar width={43} parts={[180, 405, 474]} />
      </Body>

      <StatusBar>
        <StatusText>53개 항목</StatusText>
        <StatusBarLine />
        <StatusText>1개 항목 선택함 784KB</StatusText>
        <StatusBarLine />
        <ViewButtons>
          <ViewButton type="button" aria-label="자세히" $active>
            <DetailsView />
          </ViewButton>
          <ViewButton type="button" aria-label="큰 아이콘">
            <Scenery w={36} h={27} />
          </ViewButton>
        </ViewButtons>
      </StatusBar>
    </Window>
  );
}
